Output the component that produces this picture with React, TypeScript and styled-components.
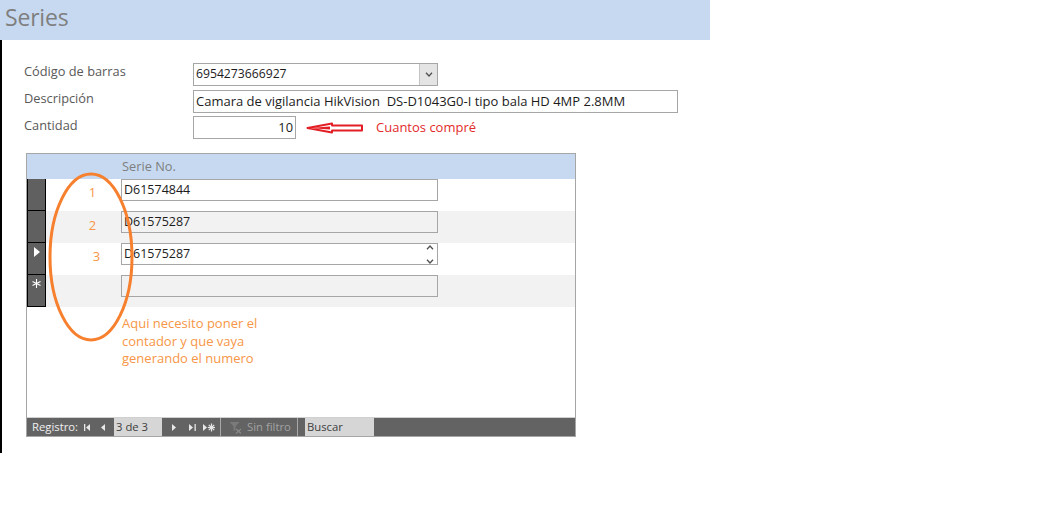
import React from "react";
import styled, { createGlobalStyle } from "styled-components";

const Global = createGlobalStyle`
  html, body { margin: 0; padding: 0; background: #ffffff; }
  body { font-family: "Open Sans", "Noto Sans", sans-serif; }
  * { box-sizing: border-box; }
`;

const Page = styled.div`
  width: 1037px;
  height: 529px;
  background: #fff;
`;

const TitleBar = styled.div`
  width: 710px;
  height: 40px;
  background: #c6d9f1;
  display: flex;
  align-items: center;
  padding-left: 5px;
`;

const Title = styled.h1`
  margin: 0;
  font-weight: 400;
  font-size: 23px;
  color: #7f7f7f;
  line-height: 1;
  margin-top: -6px;
  letter-spacing: -0.2px;
`;

const Body = styled.div`
  height: 413px;
  width: 710px;
  border-left: 2px solid #000;
  padding: 23px 0 0 22px;
`;

const Fields = styled.div`
  display: grid;
  grid-template-columns: 169px auto;
  grid-template-rows: 23px 23px 23px;
  row-gap: 3.5px;
  align-items: start;
`;

const Label = styled.div<{ $dy?: number }>`
  font-size: 12.8px;
  color: #595959;
  line-height: 17px;
  padding-top: ${(p) => p.$dy || 0}px;
`;

const Box = styled.div<{ $w: number; $align?: string; $fs?: number }>`
  width: ${(p) => p.$w}px;
  height: 23px;
  border: 1px solid #a6a6a6;
  background: #fff;
  font-size: ${(p) => p.$fs || 12.5}px;
  color: #1c1c1c;
  line-height: 20px;
  padding: 0 2px;
  display: flex;
  justify-content: ${(p) => (p.$align === "right" ? "flex-end" : "flex-start")};
  position: relative;
  white-space: pre;
`;

const ComboButton = styled.div`
  position: absolute;
  right: 0;
  top: 0;
  width: 18px;
  height: 21px;
  background: #e4e4e4;
  border-left: 1px solid #c4c4c4;
  display: flex;
  align-items: center;
  justify-content: center;
`;

const QtyRow = styled.div`
  display: flex;
  align-items: center;
  height: 23px;
`;

const Note = styled.span<{ $color: string }>`
  font-size: 13px;
  color: ${(p) => p.$color};
  line-height: 17px;
`;

const ArrowWrap = styled.span`
  display: inline-flex;
  margin: 0 12px 0 10px;
  margin-top: 1px;
`;

const Subform = styled.div`
  margin-top: 14px;
  margin-left: 2px;
  width: 550px;
  height: 284px;
  border: 1px solid #a6a6a6;
  display: flex;
  flex-direction: column;
  position: relative;
`;

const SubHeader = styled.div`
  height: 25px;
  background: #c6d9f1;
  padding-left: 95px;
  font-size: 12.8px;
  color: #7f7f7f;
  line-height: 25px;
`;

const Row = styled.div<{ $alt: boolean }>`
  height: 32px;
  display: grid;
  grid-template-columns: 19px 75px 317px 1fr;
  background: ${(p) => (p.$alt ? "#f2f2f2" : "#ffffff")};
`;

const Selector = styled.div`
  background: #606060;
  border: 1px solid #000;
  border-top-width: 0;
  display: flex;
  align-items: flex-start;
  justify-content: center;
  padding-top: 4px;
  color: #fff;
  font-size: 14px;
  line-height: 1;
`;

const Counter = styled.div<{ $dx: number; $dy: number }>`
  color: #f79646;
  font-size: 13px;
  text-align: center;
  padding-left: ${(p) => p.$dx}px;
  padding-top: ${(p) => p.$dy}px;
  line-height: 17px;
`;

const Cell = styled.div<{ $bg: string }>`
  height: 22px;
  border: 1px solid #a6a6a6;
  background: ${(p) => p.$bg};
  font-size: 12.5px;
  color: #1c1c1c;
  line-height: 19px;
  padding-left: 2px;
  position: relative;
`;

const Spinner = styled.div`
  position: absolute;
  right: 2px;
  top: 1px;
  width: 11px;
  height: 19px;
  display: flex;
  flex-direction: column;
  justify-content: space-between;
  align-items: center;
`;

const Blank = styled.div`
  flex: 1;
  padding: 8px 0 0 95px;
  display: flex;
  flex-direction: column;
`;

const NoteText = styled.div`
  color: #f79646;
  font-size: 13px;
  line-height: 17.5px;
`;

const NavBar = styled.div`
  height: 19px;
  border-top: 1px solid #d0d0d0;
  background: #636363;
  display: flex;
  align-items: stretch;
  font-size: 11.3px;
  line-height: 18px;
`;

const NavLabel = styled.span`
  color: #f0f0f0;
  padding-left: 5px;
  width: 55px;
`;

const NavBtn = styled.span<{ $w: number }>`
  width: ${(p) => p.$w}px;
  display: flex;
  align-items: center;
  justify-content: center;
`;

const NavInput = styled.span<{ $w: number }>`
  width: ${(p) => p.$w}px;
  background: #d6d6d6;
  color: #404040;
  padding-left: 2px;
`;

const NavSep = styled.span<{ $ml: number; $w: number }>`
  margin-left: ${(p) => p.$ml}px;
  width: ${(p) => p.$w}px;
  border-left: 1px solid #a8a8a8;
  border-right: 1px solid #a8a8a8;
  display: flex;
  align-items: center;
  color: #a2a2a2;
  gap: 5px;
  padding-left: 8px;
`;

const Overlay = styled.svg`
  position: absolute;
  left: 21px;
  top: 18px;
  pointer-events: none;
`;

const Tri = ({ dir }: { dir: "l" | "r" }) => (
  <svg width="4" height="7" viewBox="0 0 4 7">
    {dir === "l" ? <path d="M4 0 L0 3.5 L4 7 Z" fill="#e8e8e8" /> : <path d="M0 0 L4 3.5 L0 7 Z" fill="#e8e8e8" />}
  </svg>
);

const First = () => (
  <svg width="7" height="7" viewBox="0 0 7 7">
    <rect x="0" y="0" width="1.3" height="7" fill="#e8e8e8" />
    <path d="M6 0 L2 3.5 L6 7 Z" fill="#e8e8e8" />
  </svg>
);
const Last = () => (
  <svg width="7" height="7" viewBox="0 0 7 7">
    <path d="M0 0 L4 3.5 L0 7 Z" fill="#e8e8e8" />
    <rect x="5.5" y="0" width="1.3" height="7" fill="#e8e8e8" />
  </svg>
);
const NewRec = () => (
  <svg width="12" height="9" viewBox="0 0 12 9">
    <path d="M0 1 L4 4.5 L0 8 Z" fill="#e8e8e8" />
    <g stroke="#e8e8e8" strokeWidth="1.2">
      <line x1="8.5" y1="0.5" x2="8.5" y2="8.5" />
      <line x1="4.8" y1="4.5" x2="12" y2="4.5" />
      <line x1="5.8" y1="1.8" x2="11.2" y2="7.2" />
      <line x1="11.2" y1="1.8" x2="5.8" y2="7.2" />
    </g>
  </svg>
);

const FilterIcon = () => (
  <svg width="13" height="13" viewBox="0 0 13 13">
    <path d="M0.5 1 L10.5 1 L6.5 5.5 L6.5 9 L4.5 10 L4.5 5.5 Z" fill="#7a7a7a" />
    <g stroke="#8a8a8a" strokeWidth="1.1">
      <line x1="7" y1="8" x2="12" y2="12.5" />
      <line x1="12" y1="8" x2="7" y2="12.5" />
    </g>
  </svg>
);

const Chevron = ({ up }: { up?: boolean }) => (
  <svg width="8" height="5" viewBox="0 0 8 5">
    <path d={up ? "M1 4.2 L4 1 L7 4.2" : "M1 0.8 L4 4 L7 0.8"} stroke="#505050" strokeWidth="1.3" fill="none" />
  </svg>
);

const RedArrow = () => (
  <svg width="58" height="12" viewBox="0 0 58 12">
    <path
      d="M1.5 6 L26 1.5 L26 3.5 L56 3.5 L56 8.5 L26 8.5 L26 10.5 Z"
      fill="#fff"
      stroke="#e31e24"
      strokeWidth="2"
      strokeLinejoin="round"
    />
    <path d="M2 6 L24 4.5 L24 7.5 Z" fill="#e31e24" />
  </svg>
);

const rows = [
  { n: "1", v: "D61574844", sel: "", dx: 18, dy: 5, bg: "#ffffff" },
  { n: "2", v: "D61575287", sel: "", dx: 18, dy: 6, bg: "#f2f2f2" },
  { n: "3", v: "D61575287", sel: "arrow", dx: 26, dy: 5, bg: "#ffffff" },
  { n: "", v: "", sel: "new", dx: 0, dy: 5, bg: "#f2f2f2" },
];

export default function App() {
  return (
    <Page>
      <Global />
      <TitleBar>
        <Title>Series</Title>
      </TitleBar>
      <Body>
        <Fields>
          <Label>Código de barras</Label>
          <Box $w={245} $fs={12.2}>
            6954273666927
            <ComboButton>
              <Chevron />
            </ComboButton>
          </Box>
          <Label>Descripción</Label>
          <Box $w={485} $fs={13}>Camara de vigilancia HikVision  DS-D1043G0-I tipo bala HD 4MP 2.8MM</Box>
          <Label $dy={1}>Cantidad</Label>
          <QtyRow>
            <Box $w={103} $align="right" $fs={12.8}>10</Box>
            <ArrowWrap>
              <RedArrow />
            </ArrowWrap>
            <Note $color="#e32b2b">Cuantos compré</Note>
          </QtyRow>
        </Fields>
        <Subform>
          <SubHeader>Serie No.</SubHeader>
          {rows.map((r, i) => (
            <Row key={i} $alt={i % 2 === 1}>
              <Selector>
                {r.sel === "arrow" && (
                  <svg width="6" height="10" viewBox="0 0 6 10">
                    <path d="M0 0 L6 5 L0 10 Z" fill="#fff" />
                  </svg>
                )}
                {r.sel === "new" && (
                  <svg width="9" height="9" viewBox="0 0 9 9">
                    <g stroke="#fff" strokeWidth="1.1">
                      <line x1="4.5" y1="0" x2="4.5" y2="9" />
                      <line x1="0.5" y1="2.5" x2="8.5" y2="6.5" />
                      <line x1="8.5" y1="2.5" x2="0.5" y2="6.5" />
                    </g>
                  </svg>
                )}
              </Selector>
              <Counter $dx={r.dx} $dy={r.dy}>{r.n}</Counter>
              <Cell $bg={r.bg}>
                {r.v}
                {r.sel === "arrow" && (
                  <Spinner>
                    <Chevron up />
                    <Chevron />
                  </Spinner>
                )}
              </Cell>
              <div />
            </Row>
          ))}
          <Blank>
            <NoteText>
              Aqui necesito poner el
              <br />
              contador y que vaya
              <br />
              generando el numero
            </NoteText>
          </Blank>
          <NavBar>
            <NavLabel>Registro:</NavLabel>
            <NavBtn $w={10}><First /></NavBtn>
            <NavBtn $w={22}><Tri dir="l" /></NavBtn>
            <NavInput $w={48}>3 de 3</NavInput>
            <NavBtn $w={24}><Tri dir="r" /></NavBtn>
            <NavBtn $w={12}><Last /></NavBtn>
            <NavBtn $w={21}><NewRec /></NavBtn>
            <NavSep $ml={1} $w={78}>
              <FilterIcon />
              Sin filtro
            </NavSep>
            <NavBtn $w={7} />
            <NavInput $w={69}>Buscar</NavInput>
          </NavBar>
          <Overlay width="86" height="170" viewBox="0 0 86 170">
            <ellipse cx="43" cy="85" rx="41" ry="83" fill="none" stroke="#f7802f" strokeWidth="3" />
          </Overlay>
        </Subform>
      </Body>
    </Page>
  );
}
